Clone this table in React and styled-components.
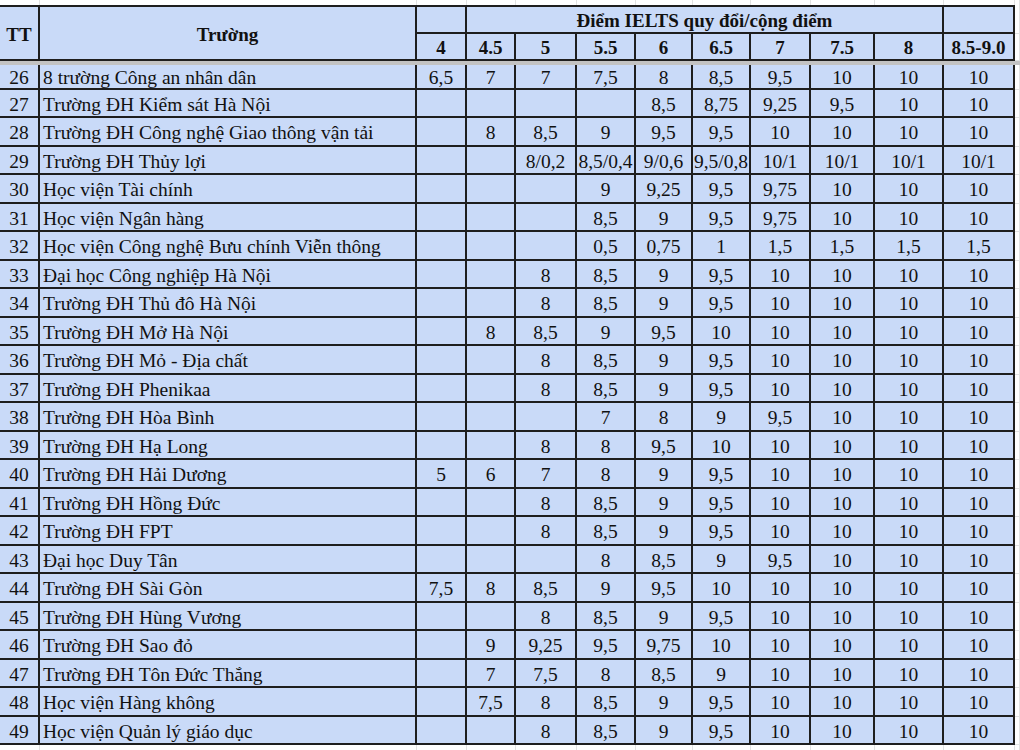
import React from "react";
import styled, { createGlobalStyle } from "styled-components";

const GlobalStyle = createGlobalStyle`
  html, body {
    margin: 0;
    padding: 0;
    background: #ffffff;
  }
  body {
    font-family: "Liberation Serif", "Times New Roman", serif;
    color: #111;
  }
`;

// widths of the sheet columns, the last one is the empty column after the table
const widths = [40, 377, 50, 49, 61, 59, 57, 58, 60, 64, 69, 71, 5];
const scores = ["4", "4.5", "5", "5.5", "6", "6.5", "7", "7.5", "8", "8.5-9.0"];

const rows = [
  [26, "8 trường Công an nhân dân", ["6,5", "7", "7", "7,5", "8", "8,5", "9,5", "10", "10", "10"]],
  [27, "Trường ĐH Kiểm sát Hà Nội", ["", "", "", "", "8,5", "8,75", "9,25", "9,5", "10", "10"]],
  [28, "Trường ĐH Công nghệ Giao thông vận tải", ["", "8", "8,5", "9", "9,5", "9,5", "10", "10", "10", "10"]],
  [29, "Trường ĐH Thủy lợi", ["", "", "8/0,2", "8,5/0,4", "9/0,6", "9,5/0,8", "10/1", "10/1", "10/1", "10/1"]],
  [30, "Học viện Tài chính", ["", "", "", "9", "9,25", "9,5", "9,75", "10", "10", "10"]],
  [31, "Học viện Ngân hàng", ["", "", "", "8,5", "9", "9,5", "9,75", "10", "10", "10"]],
  [32, "Học viện Công nghệ Bưu chính Viễn thông", ["", "", "", "0,5", "0,75", "1", "1,5", "1,5", "1,5", "1,5"]],
  [33, "Đại học Công nghiệp Hà Nội", ["", "", "8", "8,5", "9", "9,5", "10", "10", "10", "10"]],
  [34, "Trường ĐH Thủ đô Hà Nội", ["", "", "8", "8,5", "9", "9,5", "10", "10", "10", "10"]],
  [35, "Trường ĐH Mở Hà Nội", ["", "8", "8,5", "9", "9,5", "10", "10", "10", "10", "10"]],
  [36, "Trường ĐH Mỏ - Địa chất", ["", "", "8", "8,5", "9", "9,5", "10", "10", "10", "10"]],
  [37, "Trường ĐH Phenikaa", ["", "", "8", "8,5", "9", "9,5", "10", "10", "10", "10"]],
  [38, "Trường ĐH Hòa Bình", ["", "", "", "7", "8", "9", "9,5", "10", "10", "10"]],
  [39, "Trường ĐH Hạ Long", ["", "", "8", "8", "9,5", "10", "10", "10", "10", "10"]],
  [40, "Trường ĐH Hải Dương", ["5", "6", "7", "8", "9", "9,5", "10", "10", "10", "10"]],
  [41, "Trường ĐH Hồng Đức", ["", "", "8", "8,5", "9", "9,5", "10", "10", "10", "10"]],
  [42, "Trường ĐH FPT", ["", "", "8", "8,5", "9", "9,5", "10", "10", "10", "10"]],
  [43, "Đại học Duy Tân", ["", "", "", "8", "8,5", "9", "9,5", "10", "10", "10"]],
  [44, "Trường ĐH Sài Gòn", ["7,5", "8", "8,5", "9", "9,5", "10", "10", "10", "10", "10"]],
  [45, "Trường ĐH Hùng Vương", ["", "", "8", "8,5", "9", "9,5", "10", "10", "10", "10"]],
  [46, "Trường ĐH Sao đỏ", ["", "9", "9,25", "9,5", "9,75", "10", "10", "10", "10", "10"]],
  [47, "Trường ĐH Tôn Đức Thắng", ["", "7", "7,5", "8", "8,5", "9", "10", "10", "10", "10"]],
  [48, "Học viện Hàng không", ["", "7,5", "8", "8,5", "9", "9,5", "10", "10", "10", "10"]],
  [49, "Học viện Quản lý giáo dục", ["", "", "8", "8,5", "9", "9,5", "10", "10", "10", "10"]],
];

const LINE = "2px solid #1e1e1e";
const BLUE = "#c9daf8";

// bang tinh
const Sheet = styled.table`
  width: 1020px;
  table-layout: fixed;
  border-collapse: separate;
  border-spacing: 0;
  font-family: "Liberation Serif", "Times New Roman", serif;
`;

const Col = styled.col`
  width: ${props => props.$w}px;
`;

const Row = styled.tr`
  height: ${props => props.$h}px;
`;

// o tieu de (in dam)
const HeadCell = styled.th`
  box-sizing: border-box;
  background: ${BLUE};
  border-right: ${LINE};
  border-bottom: ${LINE};
  border-top: ${props => (props.$top ? LINE : "none")};
  font-size: 19px;
  font-weight: 700;
  line-height: 1;
  text-align: center;
  vertical-align: middle;
  padding: 2px 0 0;
  white-space: nowrap;
  overflow: hidden;
`;

// o du lieu
const Cell = styled.td`
  box-sizing: border-box;
  background: ${BLUE};
  border-right: ${LINE};
  border-bottom: ${LINE};
  font-size: 19.5px;
  line-height: 1;
  text-align: ${props => (props.$left ? "left" : "center")};
  padding: 3px 0 0 ${props => (props.$left ? "3px" : "0")};
  vertical-align: middle;
  white-space: nowrap;
  overflow: hidden;
`;

// o trong cua bang tinh (ngoai vung du lieu)
const Ghost = styled.td`
  box-sizing: border-box;
  background: #ffffff;
  border-right: 1px solid #e2e2e2;
  border-bottom: ${props => (props.$line ? "1px solid #e2e2e2" : "none")};
  padding: 0;
`;

// vach dong bang (freeze)
const Freeze = styled.td`
  height: 4px;
  padding: 0;
  background: #c3c3c3;
`;

const GhostRow = ({ h }) => (
  <Row $h={h}>
    {widths.map((w, i) => (
      <Ghost key={i} />
    ))}
  </Row>
);

const App = () => {
  return (
    <>
      <GlobalStyle />
      <Sheet>
        <colgroup>
          {widths.map((w, i) => (
            <Col key={i} $w={w} />
          ))}
        </colgroup>
        <thead>
          <GhostRow h={5} />
          <Row $h={29}>
            <HeadCell $top rowSpan={2}>TT</HeadCell>
            <HeadCell $top rowSpan={2}>Trường</HeadCell>
            <HeadCell $top />
            <HeadCell $top colSpan={8}>Điểm IELTS quy đổi/cộng điểm</HeadCell>
            <HeadCell $top />
            <Ghost $line />
          </Row>
          <Row $h={27}>
            {scores.map(s => (
              <HeadCell key={s}>{s}</HeadCell>
            ))}
            <Ghost $line />
          </Row>
          <tr>
            <Freeze colSpan={widths.length} />
          </tr>
        </thead>
        <tbody>
          {rows.map(([tt, name, vals], idx) => (
            <Row key={tt} $h={idx === 0 ? 24 : 28.5}>
              <Cell>{tt}</Cell>
              <Cell $left>{name}</Cell>
              {vals.map((v, i) => (
                <Cell key={i}>{v}</Cell>
              ))}
              <Ghost $line />
            </Row>
          ))}
          <GhostRow h={6} />
        </tbody>
      </Sheet>
    </>
  );
};

export default App;
